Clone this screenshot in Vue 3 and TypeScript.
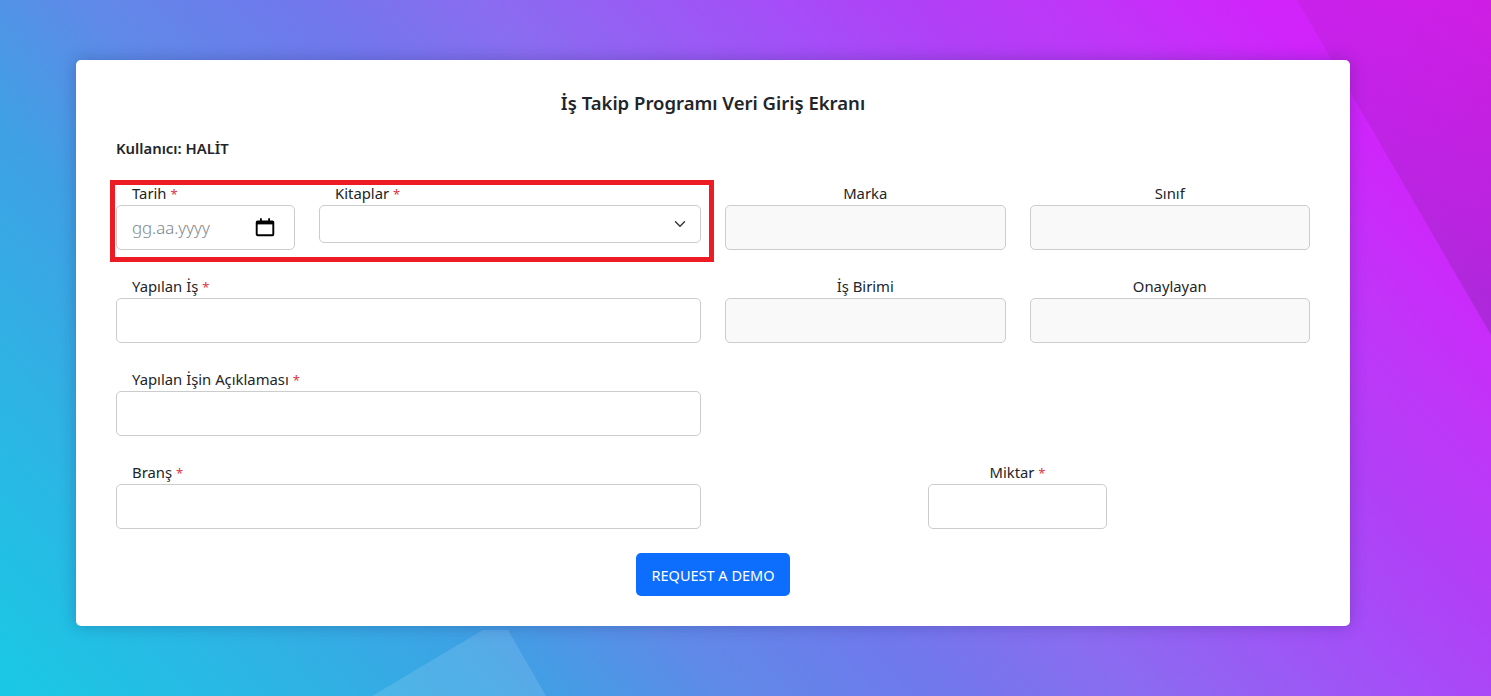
<script setup lang="ts">
interface Field {
  label: string
  required?: boolean
  cls: string
  readonly?: boolean
}
const rowTwo: Field[] = [
  { label: 'Marka', cls: 'c3 center', readonly: true },
  { label: 'Sınıf', cls: 'c4 center', readonly: true },
]
</script>

<template>
  <div class="page">
    <svg class="bg" viewBox="0 0 1491 696" preserveAspectRatio="none" aria-hidden="true">
      <defs>
        <linearGradient id="corner" x1="0" y1="0" x2="0" y2="1">
          <stop offset="0" stop-color="#a81cb4" stop-opacity="0.2" />
          <stop offset="1" stop-color="#8c28b8" stop-opacity="0.5" />
        </linearGradient>
      </defs>
      <polygon points="1297,0 1491,0 1491,335" fill="url(#corner)" />
      <polygon points="372,696 483,630 508,630 546,696" fill="#ffffff" fill-opacity="0.12" />
    </svg>
    <main class="card">
      <h1 class="title">İş Takip Programı Veri Giriş Ekranı</h1>
      <p class="user">Kullanıcı: HALİT</p>
      <form class="form" @submit.prevent>
        <div class="field c1">
          <label>Tarih <span class="req">*</span></label>
          <div class="control date">
            <span class="ph">gg.aa.yyyy</span>
            <svg class="cal" viewBox="0 0 20 20" width="20" height="20" aria-hidden="true">
              <path d="M2.5 4.500h15a.8.8 0 0 1 .8.8v12a.9.9 0 0 1-.9.9H2.600a.9.9 0 0 1-.9-.9v-12a.8.8 0 0 1 .8-.8Z" fill="none" stroke="#000" stroke-width="1.9" />
              <path d="M2 4h16v3.400H2z" fill="#000" />
              <path d="M5 1.200h1.800V5H5zM13.200 1.200H15V5h-1.800z" fill="#000" />
            </svg>
          </div>
        </div>
        <div class="field c2">
          <label>Kitaplar <span class="req">*</span></label>
          <div class="control select">
            <svg viewBox="0 0 16 16" width="12" height="12" aria-hidden="true">
              <path d="m2 5 6 6 6-6" fill="none" stroke="#343a40" stroke-width="2" stroke-linecap="round" stroke-linejoin="round" />
            </svg>
          </div>
        </div>
        <div v-for="f in rowTwo" :key="f.label" class="field" :class="f.cls">
          <label>{{ f.label }}</label>
          <input class="control muted" readonly />
        </div>

        <div class="field c12">
          <label>Yapılan İş <span class="req">*</span></label>
          <input class="control" />
        </div>
        <div class="field c3 center">
          <label>İş Birimi</label>
          <input class="control muted" readonly />
        </div>
        <div class="field c4 center">
          <label>Onaylayan</label>
          <input class="control muted" readonly />
        </div>

        <div class="field c12 full">
          <label>Yapılan İşin Açıklaması <span class="req">*</span></label>
          <input class="control" />
        </div>

        <div class="field c12">
          <label>Branş <span class="req">*</span></label>
          <input class="control" />
        </div>
        <div class="field c34 center">
          <label>Miktar <span class="req">*</span></label>
          <input class="control" />
        </div>
      </form>
      <div class="actions">
        <button type="button" class="btn">REQUEST A DEMO</button>
      </div>
      <div class="annotation" aria-hidden="true"></div>
    </main>
  </div>
</template>

<style>
html,
body {
  margin: 0;
  padding: 0;
}
</style>

<style scoped>
.page {
  position: relative;
  box-sizing: border-box;
  width: 1491px;
  height: 696px;
  overflow: hidden;
  padding: 60px 141px 70px 76px;
  background: linear-gradient(47deg, #19c9e4 0%, #2cb5e4 13%, #3fa0e4 25%, #5f8ae8 34%, #7078ec 44%, #8a6cf0 53%, #a64cf8 67%, #b040f6 73%, #c035f8 81%, #d024fb 89%, #d81ef0 100%);
  font-family: "Noto Sans", "Open Sans", sans-serif;
  font-size: 14.85px;
  color: #212529;
}
.bg {
  position: absolute;
  inset: 0;
  width: 100%;
  height: 100%;
}
.card {
  position: relative;
  box-sizing: border-box;
  height: 566px;
  padding: 29px 40px 30px;
  background: #fff;
  border-radius: 5px;
  box-shadow: 0 0 16px rgba(30, 30, 90, 0.28);
}
.title {
  margin: 0;
  height: 28px;
  line-height: 28px;
  text-align: center;
  font-size: 18.5px;
  font-weight: 600;
}
.user {
  margin: 19px 0 21px;
  line-height: 24px;
  font-size: 14.85px;
  font-weight: 600;
}
.form {
  display: grid;
  grid-template-columns: 179px 382px 280.5px 280.5px;
  column-gap: 24px;
  row-gap: 24px;
  align-items: start;
}
.c1 { grid-column: 1; }
.c2 { grid-column: 2; }
.c3 { grid-column: 3; }
.c4 { grid-column: 4; }
.c12 { grid-column: 1 / span 2; }
.c34 { grid-column: 3 / span 2; justify-self: center; width: 179px; }
.full { grid-column: 1 / span 2; }
.field label {
  display: block;
  height: 24px;
  line-height: 24px;
  padding-left: 16px;
}
.center label {
  padding-left: 0;
  text-align: center;
}
.req {
  color: #dc3545;
  font-size: 13px;
}
.control {
  display: block;
  box-sizing: border-box;
  width: 100%;
  height: 45px;
  margin: 0;
  padding: 0 16px;
  border: 1px solid #cccccc;
  border-radius: 5px;
  background: #fff;
  font: inherit;
  outline: none;
}
.muted {
  background: #f9f9f9;
}
.date {
  display: flex;
  align-items: center;
  justify-content: space-between;
  padding-left: 15px;
  padding-right: 19px;
}
.ph {
  color: #7f878f;
  font-size: 16.8px;
  font-weight: 300;
}
.cal {
  margin-top: -2px;
}
.select {
  display: flex;
  align-items: center;
  justify-content: flex-end;
  height: 38px;
  padding-right: 14px;
}
.actions {
  display: flex;
  justify-content: center;
  margin-top: 24px;
}
.btn {
  box-sizing: border-box;
  width: 154px;
  height: 43px;
  padding: 1px 0 0;
  border: 0;
  border-radius: 5px;
  background: #0d6efd;
  color: #fff;
  font: inherit;
  font-size: 14.5px;
}
.annotation {
  position: absolute;
  left: 34px;
  top: 120px;
  box-sizing: border-box;
  width: 604px;
  height: 82px;
  border: 5px solid #ed1c24;
  pointer-events: none;
}
</style>
